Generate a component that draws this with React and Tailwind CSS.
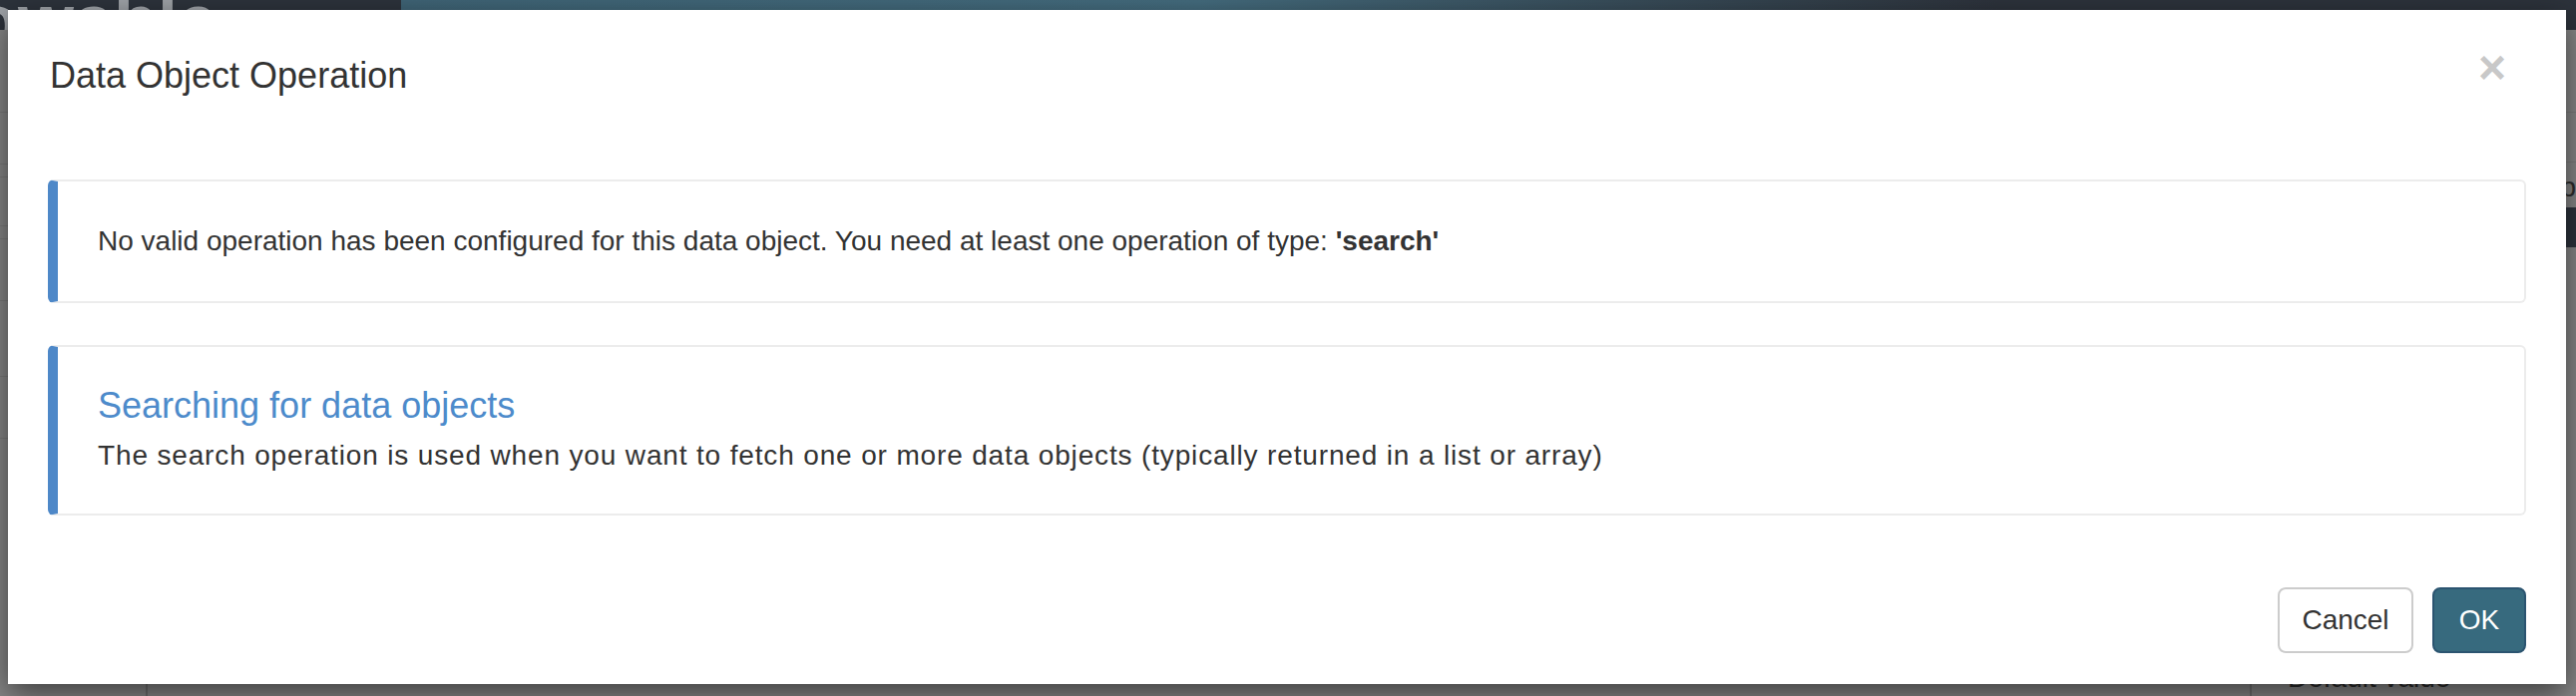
import React from 'react'

function Navbar() {
  return (
    <div className="flex h-[30px] w-full overflow-hidden bg-[#2d333c]">
      <div className="flex w-[402px] shrink-0 items-end overflow-hidden">
        <span className="-ml-[70px] -mb-[26px] text-[72px] font-bold leading-none text-[#9ea2a7]">flowable</span>
        <span className="ml-[50px] -mb-[8px] text-[22px] leading-none text-[#8b9096]">Apps</span>
      </div>
      <div className="flex flex-1 items-end bg-gradient-to-r from-[#3f6476] via-[#446c7e] to-[#2d333c] pl-[30px]">
        <span className="-mb-[14px] text-[30px] leading-none text-[#9fb0b8]">✱</span>
        <span className="ml-[40px] -mb-[12px] text-[22px] leading-none text-[#8ea3ad]">Data objects · Data object model</span>
      </div>
      <div className="w-[580px] shrink-0 bg-[#2d333c]" />
    </div>
  )
}

function BackgroundPage() {
  return (
    <div className="flex h-[668px] w-full bg-[#878787]">
      <div className="flex w-[148px] shrink-0 flex-col border-r-2 border-[#6f6f6f]">
        <div className="h-[83px] border-b border-[#7b7b7b]" />
        <div className="h-[52px] border-b border-[#7b7b7b]" />
        <div className="h-[13px] border-b border-[#7b7b7b]" />
        <div className="h-[49px] border-b border-[#7b7b7b]" />
        <div className="h-[13px] border-b border-[#7b7b7b]" />
        <div className="h-[62px] border-b border-[#7b7b7b]" />
        <div className="h-[76px] border-b border-[#7b7b7b]" />
        <div className="h-[62px] border-b border-[#7b7b7b]" />
      </div>
      <div className="flex-1" />
      <div className="flex w-[327px] shrink-0 flex-col border-l-2 border-[#6f6f6f] pl-[36px]">
        <div className="h-[83px] border-b border-[#7b7b7b]" />
        <div className="h-[50px] border-b border-[#7b7b7b]" />
        <div className="h-[45px] pt-[10px] text-right text-[28px] leading-[30px] text-[#2e2e2e]">Attrib</div>
        <div className="h-[40px] bg-[#2d333c]" />
        <div className="flex-1" />
        <div className="text-[28px] leading-[32px] text-[#2a2a2a]">Default value</div>
        <div className="h-[2px]" />
      </div>
    </div>
  )
}

function Callout({ children, className = '' }) {
  return (
    <div className={`rounded-[6px] border-2 border-[#ececec] border-l-[10px] border-l-[#4e88c8] pl-[40px] pr-[40px] ${className}`}>
      {children}
    </div>
  )
}

export default function App() {
  return (
    <div className="relative h-[698px] w-[2582px] overflow-hidden bg-[#878787] font-['Liberation_Sans',Arial,sans-serif]">
      <Navbar />
      <BackgroundPage />

      {/* modal */}
      <div className="absolute inset-0 pl-[8px] pr-[10px] pt-[10px]">
        <div className="flex flex-col bg-white text-[#333333] shadow-[0_10px_30px_rgba(0,0,0,0.55)]">
          {/* header */}
          <div className="flex h-[91px] items-start justify-between pl-[42px] pr-[60px] pt-[41px]">
            <h4 className="text-[36px] font-normal leading-[50px]">Data Object Operation</h4>
            <button className="mt-[-5px] text-[48px] font-bold leading-[44px] text-[#c8c8c8]">×</button>
          </div>

          {/* body */}
          <div className="px-[40px] pt-[79px]">
            <Callout className="pt-[40px] pb-[41px]">
              <p className="text-[28px] leading-[39px]">
                No valid operation has been configured for this data object. You need at least one operation of type: <b>'search'</b>
              </p>
            </Callout>
            <Callout className="mt-[42px] pt-[40px] pb-[39px]">
              <h4 className="text-[36px] leading-[38px] text-[#4d8bcb]">Searching for data objects</h4>
              <p className="mt-[11px] text-[28px] leading-[39px] tracking-[0.85px]">
                The search operation is used when you want to fetch one or more data objects (typically returned in a list or array)
              </p>
            </Callout>
          </div>

          {/* footer */}
          <div className="flex justify-end gap-[19px] pb-[31px] pr-[40px] pt-[72px]">
            <button className="h-[66px] w-[136px] rounded-[8px] border-2 border-[#cccccc] bg-white text-[28px] text-[#333333]">Cancel</button>
            <button className="h-[66px] w-[94px] rounded-[8px] border-2 border-[#2b5470] bg-[#376a7e] text-[28px] text-white">OK</button>
          </div>
        </div>
      </div>
    </div>
  )
}
